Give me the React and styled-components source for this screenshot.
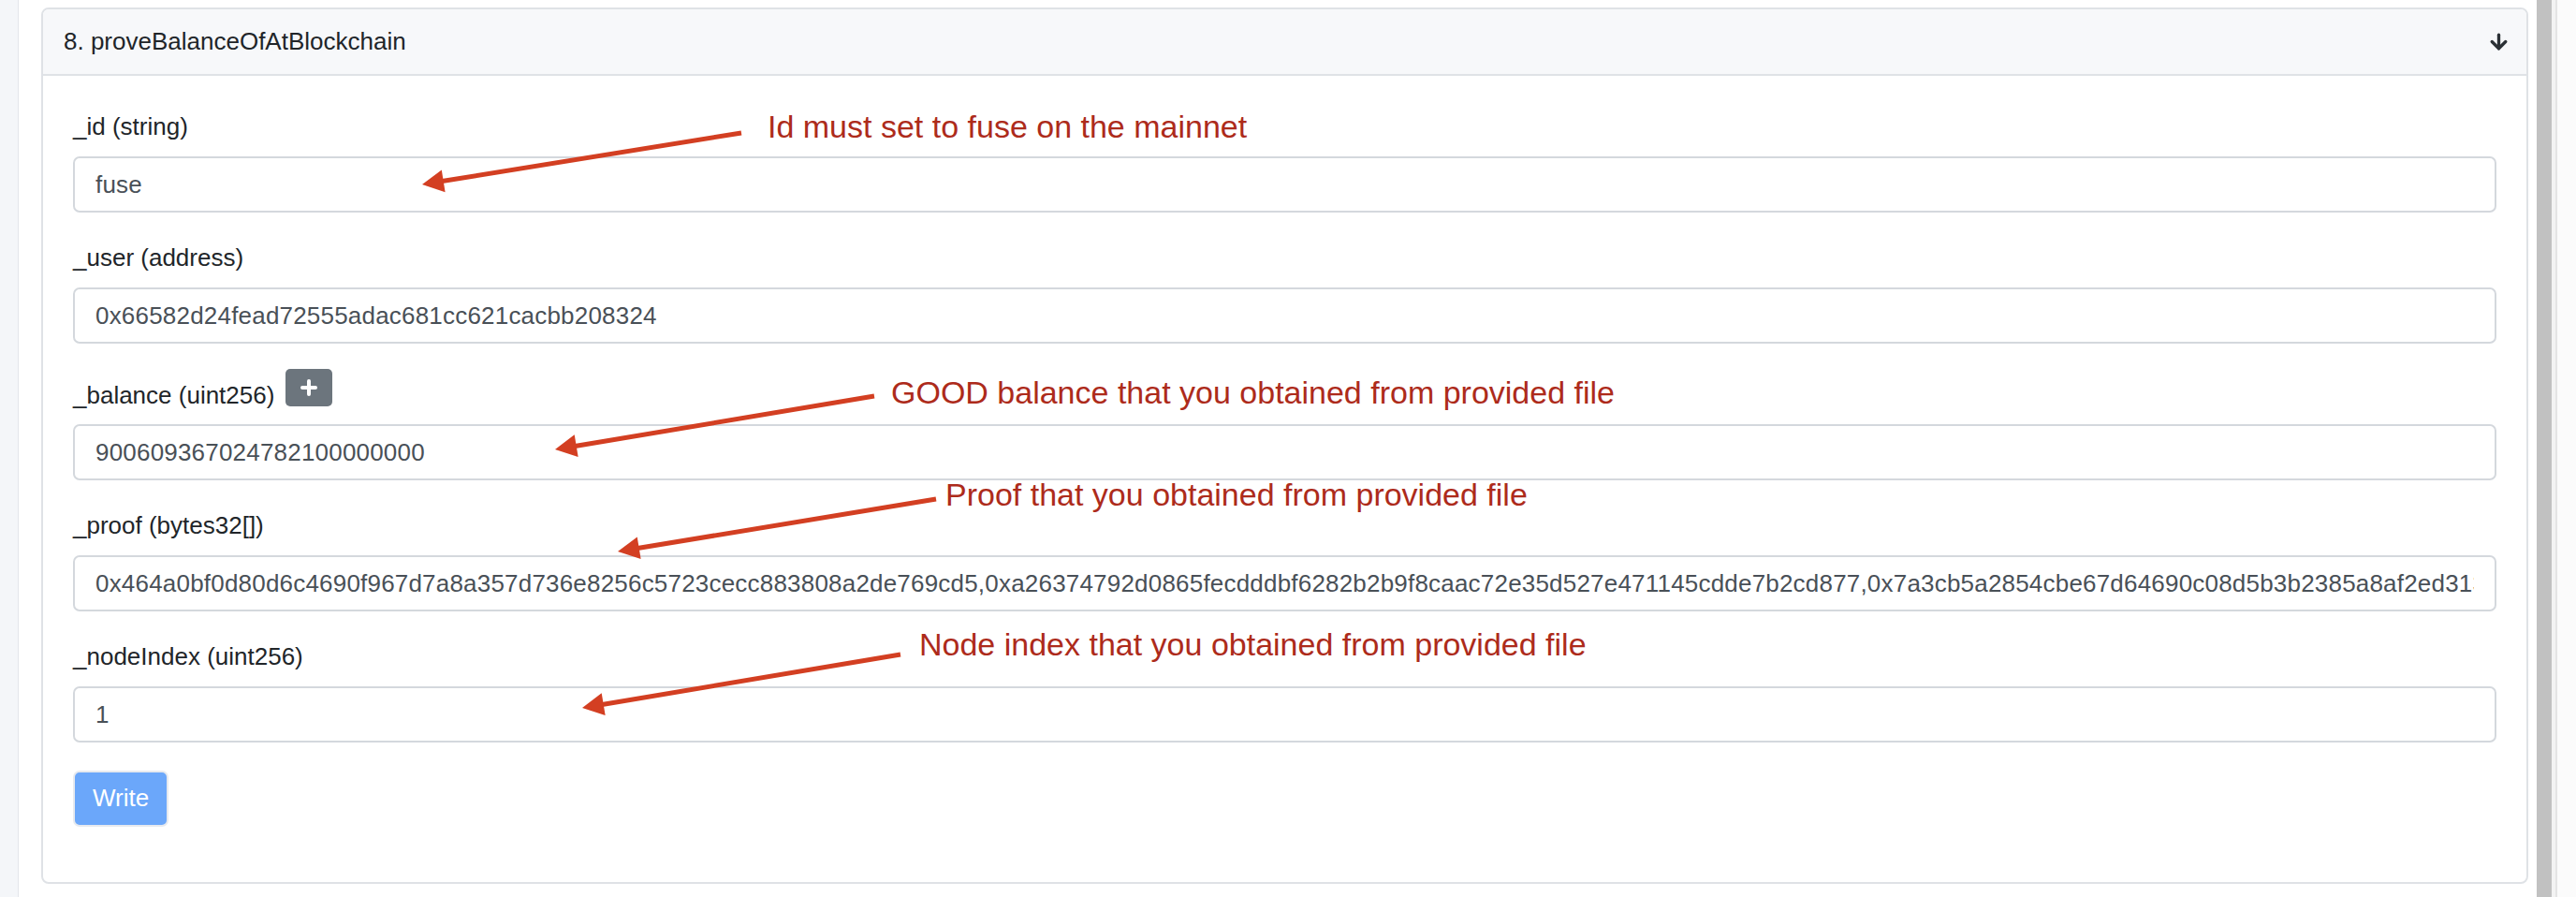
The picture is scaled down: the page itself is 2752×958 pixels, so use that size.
import React from "react";
import styled, { createGlobalStyle } from "styled-components";
import { ArrowDown, Plus } from "lucide-react";

const GlobalStyle = createGlobalStyle`
  html, body { margin: 0; padding: 0; background: #ffffff; }
  body { font-family: "Liberation Sans", Arial, Helvetica, sans-serif; }
  *, *::before, *::after { box-sizing: border-box; }
`;

const Page = styled.div`
  position: relative;
  display: flex;
  height: 100vh;
  overflow: hidden;
  background: #ffffff;
`;

const SideStrip = styled.div`
  flex: 0 0 20px;
  background: #f4f6f9;
  border-right: 1px solid #e3e6eb;
`;

const Main = styled.main`
  flex: 1;
  min-width: 0;
  padding: 8px 0 0 24px;
`;

const ScrollGutter = styled.div`
  flex: 0 0 51px;
  display: flex;
  padding-left: 9px;
`;

const Thumb = styled.div`
  flex: 0 0 16px;
  background: #c1c1c1;
`;

const TrackEdge = styled.div`
  flex: 0 0 4px;
  background: #f3f3f3;
`;

const OuterRail = styled.div`
  flex: 1;
  background: #fbfbfb;
  border-left: 2px solid #e4e4e4;
`;

const Card = styled.section`
  border: 2px solid #dfe2e6;
  border-radius: 8px;
  background: #ffffff;
  overflow: hidden;
`;

const CardHeader = styled.header`
  display: flex;
  align-items: center;
  justify-content: space-between;
  padding: 15px 17px 15px 22px;
  line-height: 39px;
  font-size: 26px;
  color: #212529;
  background: #f7f8fa;
  border-bottom: 2px solid #dfe2e6;
`;

const HeaderIcon = styled.span`
  display: flex;
  align-items: center;
  color: #2b3035;
`;

const CardBody = styled.div`
  padding: 35px 32px 59px;
`;

const FieldGroup = styled.div`
  margin-bottom: ${(p) => (p.$last ? 30 : 29)}px;
`;

const LabelRow = styled.div`
  display: flex;
  align-items: flex-end;
  gap: 12px;
  height: ${(p) => (p.$withAction ? 46 : 39)}px;
  margin-bottom: ${(p) => (p.$withAction ? 11 : 12)}px;
`;

const Label = styled.label`
  display: block;
  font-size: 26px;
  line-height: 39px;
  color: #212529;
  white-space: nowrap;
`;

const AddButton = styled.button`
  align-self: flex-start;
  margin-top: -2px;
  width: 50px;
  height: 40px;
  padding: 0;
  border: none;
  border-radius: 5px;
  background: #6c757d;
  color: #ffffff;
  display: flex;
  align-items: center;
  justify-content: center;
`;

const TextInput = styled.input`
  display: block;
  width: 100%;
  height: 60px;
  padding: 0 22px;
  border: 2px solid #d4d8dd;
  border-radius: 7px;
  background: #ffffff;
  font-family: inherit;
  font-size: 26px;
  letter-spacing: 0.2px;
  color: #495057;
  outline: none;
`;

const WriteButton = styled.button`
  display: block;
  height: 60px;
  padding: 0 19px 2px;
  border: 2px solid #e7eaef;
  border-radius: 7px;
  background: #6ba7fa;
  color: #ffffff;
  font-family: inherit;
  font-size: 26px;
  line-height: 54px;
`;

const Overlay = styled.div`
  position: absolute;
  inset: 0;
  pointer-events: none;
`;

const ArrowLayer = styled.svg`
  position: absolute;
  left: 0;
  top: 0;
`;

const Note = styled.div`
  position: absolute;
  left: ${(p) => p.$x}px;
  top: ${(p) => p.$y}px;
  font-size: 34px;
  line-height: 1;
  color: #ad2b1b;
  white-space: nowrap;
`;

const ARROW_COLOR = "#d33f22";

function Arrow({ x1, y1, x2, y2 }) {
  const dx = x2 - x1;
  const dy = y2 - y1;
  const len = Math.hypot(dx, dy);
  const ux = dx / len;
  const uy = dy / len;
  const hl = 23;
  const hw = 12;
  const bx = x2 - ux * hl;
  const by = y2 - uy * hl;
  const px = -uy;
  const py = ux;
  return (
    <g>
      <line
        x1={x1}
        y1={y1}
        x2={bx + ux * 3}
        y2={by + uy * 3}
        stroke={ARROW_COLOR}
        strokeWidth="5"
      />
      <polygon
        points={`${x2},${y2} ${bx + px * hw},${by + py * hw} ${bx - px * hw},${by - py * hw}`}
        fill={ARROW_COLOR}
      />
    </g>
  );
}

const fields = [
  { label: "_id (string)", value: "fuse" },
  { label: "_user (address)", value: "0x66582d24fead72555adac681cc621cacbb208324" },
  { label: "_balance (uint256)", value: "900609367024782100000000", action: true },
  {
    label: "_proof (bytes32[])",
    value:
      "0x464a0bf0d80d6c4690f967d7a8a357d736e8256c5723cecc883808a2de769cd5,0xa26374792d0865fecdddbf6282b2b9f8caac72e35d527e471145cdde7b2cd877,0x7a3cb5a2854cbe67d64690c08d5b3b2385a8af2ed313c4e1d0a9b7f6e5d2c1a0",
  },
  { label: "_nodeIndex (uint256)", value: "1" },
];

const notes = [
  { x: 820, y: 118, text: "Id must set to fuse on the mainnet" },
  { x: 952, y: 402, text: "GOOD balance that you obtained from provided file" },
  { x: 1010, y: 511, text: "Proof that you obtained from provided file" },
  { x: 982, y: 671, text: "Node index that you obtained from provided file" },
];

const arrows = [
  { x1: 792, y1: 142, x2: 451, y2: 197 },
  { x1: 934, y1: 423, x2: 593, y2: 480 },
  { x1: 1000, y1: 533, x2: 660, y2: 589 },
  { x1: 962, y1: 699, x2: 622, y2: 756 },
];

export default function App() {
  return (
    <>
      <GlobalStyle />
      <Page>
        <SideStrip />
        <Main>
          <Card>
            <CardHeader>
              <span>8. proveBalanceOfAtBlockchain</span>
              <HeaderIcon>
                <ArrowDown size={25} strokeWidth={3.2} />
              </HeaderIcon>
            </CardHeader>
            <CardBody>
              {fields.map((f, i) => (
                <FieldGroup key={f.label} $last={i === fields.length - 1}>
                  <LabelRow $withAction={!!f.action}>
                    <Label>{f.label}</Label>
                    {f.action && (
                      <AddButton type="button">
                        <Plus size={24} strokeWidth={4} />
                      </AddButton>
                    )}
                  </LabelRow>
                  <TextInput type="text" value={f.value} readOnly />
                </FieldGroup>
              ))}
              <WriteButton type="button">Write</WriteButton>
            </CardBody>
          </Card>
        </Main>
        <ScrollGutter>
          <Thumb />
          <TrackEdge />
          <OuterRail />
        </ScrollGutter>
        <Overlay>
          <ArrowLayer width="2752" height="958" viewBox="0 0 2752 958">
            {arrows.map((a, i) => (
              <Arrow key={i} {...a} />
            ))}
          </ArrowLayer>
          {notes.map((n) => (
            <Note key={n.text} $x={n.x} $y={n.y}>
              {n.text}
            </Note>
          ))}
        </Overlay>
      </Page>
    </>
  );
}
